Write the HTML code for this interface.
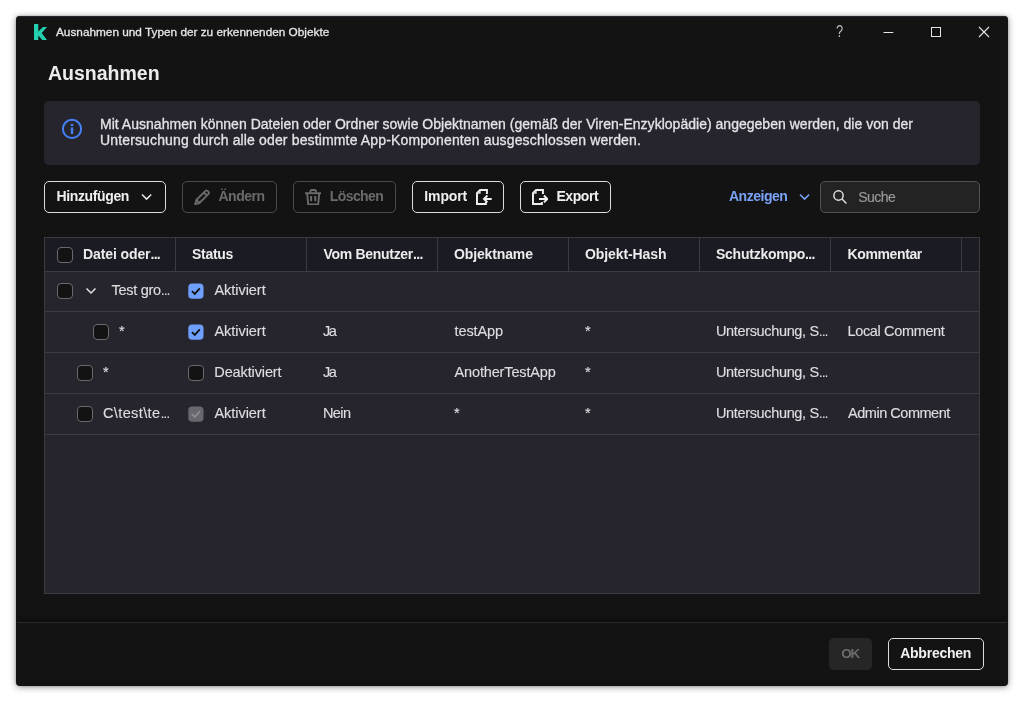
<!DOCTYPE html>
<html lang="de">
<head>
<meta charset="utf-8">
<title>Ausnahmen und Typen der zu erkennenden Objekte</title>
<style>
*{box-sizing:border-box;margin:0;padding:0}
html,body{width:1024px;height:702px;background:#fff;overflow:hidden}
body{font-family:"Liberation Sans",sans-serif;color:#e9e9e9;position:relative}
.win{will-change:transform;position:absolute;left:16px;top:16px;width:992px;height:670px;background:#131313;border-radius:4px;box-shadow:0 1px 7px rgba(0,0,0,.42),0 0 2px rgba(0,0,0,.3),inset 0 1px 0 #25252e}
.abs{position:absolute;white-space:nowrap}
.title{left:40px;top:9px;font-size:11.8px;line-height:14px;color:#e6e6e6}
.h1{left:32px;top:44px;font-size:19.5px;line-height:26px;font-weight:bold;color:#ececec}
.info{position:absolute;left:28px;top:85px;width:936px;height:64px;background:#26252e;border-radius:5px}
.info p{position:absolute;left:56px;top:15px;font-size:14px;line-height:16px;color:#e4e4e6;white-space:nowrap}
.btn{position:absolute;top:165px;height:32px;border:1px solid #dcdcdc;border-radius:5px;font-size:14px;font-weight:bold;color:#f0f0f0;line-height:30px;white-space:nowrap}
.btn.dis{border-color:#4b4b4b;color:#6b6b6b}
.btn span{position:absolute;top:-1px}
.search{position:absolute;left:804px;top:165px;width:160px;height:32px;border:1px solid #525252;border-radius:5px;background:#232323}
.search span{position:absolute;left:37.300px;top:-.5px;line-height:31px;font-size:14px;letter-spacing:-.55px;color:#9a9a9a}
.link{left:713px;top:165px;line-height:31px;font-size:14px;font-weight:bold;color:#7aa2f7;letter-spacing:-.49px}
.table{position:absolute;left:28px;top:221px;width:936px;height:357px;background:#26252e;border:1px solid #3b3b41}
.thead{position:absolute;left:0;top:0;width:934px;height:34px;background:#1b1b24;border-bottom:1px solid #3b3b41;z-index:2}
.th{position:absolute;top:0;height:33px;line-height:33px;font-size:14px;font-weight:bold;color:#ececec;white-space:nowrap}
.vs{position:absolute;top:0;width:1px;height:33px;background:#3b3b41}
.row{position:absolute;left:0;width:934px;height:41px;border-bottom:1px solid #3c3c45}
.td{position:absolute;top:-.8px;line-height:40px;font-size:14.5px;color:#dedee0;white-space:nowrap}
.title,.info p{-webkit-text-stroke:.3px}
.td,.search span{-webkit-text-stroke:.15px}
.td .e{-webkit-text-stroke:0}
.e{letter-spacing:-1.1px}
.th .e{letter-spacing:-.7px}
.cb{position:absolute;width:16px;height:16px;border:1px solid #6a6a6c;border-radius:4px;background:#131313}
.cb.on,.cb.gray{background:none;border:0}
.foot{position:absolute;left:1px;top:606px;width:990px;height:1px;background:#2b2b2b}
.foot:before{content:"";position:absolute;left:0;top:-7px;width:990px;height:7px;background:linear-gradient(rgba(0,0,0,0),rgba(0,0,0,.28))}
svg{display:block}
</style>
</head>
<body>
<div class="win">
  <!-- title bar -->
  <svg class="abs" style="left:18px;top:8px" width="13" height="16" viewBox="0 0 13 16"><path d="M0 0H4.300V7.400L9 3H13L7.700 8.900L13 16H8.300L4.300 11.400V16H0Z" fill="#23d1ae"/></svg>
  <div class="abs title">Ausnahmen und Typen der zu erkennenden Objekte</div>
  <div class="abs" style="left:820.400px;top:7.500px;font-size:16px;line-height:16px;color:#bdbdbd;transform:scaleX(.8);transform-origin:0 0">?</div>
  <svg class="abs" style="left:866px;top:10px" width="12" height="12" viewBox="0 0 12 12"><path d="M1.500 6.500h9.800" stroke="#e6e6e6" stroke-width="1" fill="none"/></svg>
  <svg class="abs" style="left:914px;top:10px" width="12" height="12" viewBox="0 0 12 12"><rect x="1.500" y="1.500" width="9" height="9" stroke="#e6e6e6" stroke-width="1" fill="none"/></svg>
  <svg class="abs" style="left:962px;top:10px" width="12" height="12" viewBox="0 0 12 12"><path d="M1 1l10 10M11 1L1 11" stroke="#e6e6e6" stroke-width="1.100" fill="none"/></svg>

  <div class="abs h1">Ausnahmen</div>

  <div class="info">
    <svg class="abs" style="left:17px;top:17px" width="22" height="22" viewBox="0 0 22 22"><circle cx="11" cy="10.900" r="9.100" fill="none" stroke="#4680f6" stroke-width="2"/><rect x="9.800" y="9.300" width="2.400" height="6.700" fill="#4680f6"/><rect x="9.800" y="5.900" width="2.400" height="2.100" fill="#4680f6"/></svg>
    <p><span style="letter-spacing:.02px">Mit Ausnahmen können Dateien oder Ordner sowie Objektnamen (gemäß der Viren-Enzyklopädie) angegeben werden, die von der</span><br><span style="letter-spacing:.143px">Untersuchung durch alle oder bestimmte App-Komponenten ausgeschlossen werden.</span></p>
  </div>

  <!-- toolbar -->
  <div class="btn" style="left:28px;width:122px"><span style="left:11.500px;letter-spacing:-.37px">Hinzufügen</span>
    <svg class="abs" style="left:95.500px;top:10.500px" width="12" height="8" viewBox="0 0 12 8"><path d="M1 1.500l4.600 4.600 4.600-4.600" stroke="#e6e6e6" stroke-width="1.500" fill="none"/></svg></div>
  <div class="btn dis" style="left:166px;width:95px">
    <svg class="abs" style="left:10.800px;top:6.800px" width="16.400" height="16.400" viewBox="0 0 16 16"><path d="M1.200 14.800L2.300 10.700L11.200 1.800a1.400 1.400 0 0 1 2 0l1 1a1.400 1.400 0 0 1 0 2L5.300 13.700ZM2.300 10.700L5.300 13.700M9.600 3.400L12.600 6.400" stroke="#6b6b6b" stroke-width="1.850" fill="none" stroke-linejoin="round"/></svg>
    <span style="left:35.400px;letter-spacing:-.46px">Ändern</span></div>
  <div class="btn dis" style="left:277px;width:103px">
    <svg class="abs" style="left:10.800px;top:6.800px" width="16.400" height="16.400" viewBox="0 0 16.400 16.400"><path d="M5.400 3.400V2.500a1.500 1.500 0 0 1 1.500-1.500h2.600a1.500 1.500 0 0 1 1.500 1.500V3.400" stroke="#6b6b6b" stroke-width="1.900" fill="none"/><path d="M0 4.200h16.400" stroke="#6b6b6b" stroke-width="1.900"/><path d="M2.200 5L3.200 15.400H13.200L14.200 5" stroke="#6b6b6b" stroke-width="1.900" fill="none"/><path d="M6.100 7.100v5.100M10.300 7.100v5.100" stroke="#6b6b6b" stroke-width="2"/></svg>
    <span style="left:35.800px;letter-spacing:-.6px">Löschen</span></div>
  <div class="btn" style="left:396px;width:92px"><span style="left:11.300px;letter-spacing:-.12px">Import</span>
    <svg class="abs" style="left:62.900px;top:6.700px" width="16.600" height="16.600" viewBox="0 0 17 17"><path d="M11.200 5V1H4.200L1 4.200V15.300H10.100V13.400" stroke="#f0f0f0" stroke-width="2" fill="none"/><path d="M1 4.800L4.800 1V4.800Z" fill="#d8d8d8"/><path d="M16.100 10.200H8.800M11.700 6.700L8.200 10.200L11.700 13.700" stroke="#f0f0f0" stroke-width="2" fill="none"/></svg></div>
  <div class="btn" style="left:504px;width:91px">
    <svg class="abs" style="left:10.900px;top:6.700px" width="16.600" height="16.600" viewBox="0 0 17 17"><path d="M11.200 5V1H4.200L1 4.200V15.300H10.100V13.400" stroke="#f0f0f0" stroke-width="2" fill="none"/><path d="M1 4.800L4.800 1V4.800Z" fill="#d8d8d8"/><path d="M7.100 10.200H15.200M12.200 6.700L15.700 10.200L12.200 13.700" stroke="#f0f0f0" stroke-width="2" fill="none"/></svg>
    <span style="left:35.400px;letter-spacing:-.42px">Export</span></div>
  <div class="abs link">Anzeigen</div>
  <svg class="abs" style="left:782.500px;top:177px" width="12" height="8" viewBox="0 0 12 8"><path d="M1 1.500l4.600 4.600 4.600-4.600" stroke="#7aa2f7" stroke-width="1.500" fill="none"/></svg>
  <div class="search">
    <svg class="abs" style="left:11px;top:6.800px" width="15.800" height="15.800" viewBox="0 0 17 17"><circle cx="7" cy="7" r="5" stroke="#e0e0e0" stroke-width="1.600" fill="none"/><path d="M10.800 10.800l4.700 4.700" stroke="#e0e0e0" stroke-width="1.600"/></svg>
    <span>Suche</span></div>

  <!-- table -->
  <div class="table">
    <div class="thead">
      <div class="cb" style="left:12px;top:9px"></div>
      <div class="th" style="left:38px;letter-spacing:-.1px">Datei oder<span class="e">...</span></div>
      <div class="th" style="left:147px;letter-spacing:-.28px">Status</div>
      <div class="th" style="left:278.500px;letter-spacing:-.3px">Vom Benutzer<span class="e">...</span></div>
      <div class="th" style="left:409px;letter-spacing:-.13px">Objektname</div>
      <div class="th" style="left:540px;letter-spacing:-.1px">Objekt-Hash</div>
      <div class="th" style="left:671px;letter-spacing:-.25px">Schutzkompo<span class="e">...</span></div>
      <div class="th" style="left:802.500px;letter-spacing:-.375px">Kommentar</div>
      <div class="vs" style="left:130px"></div><div class="vs" style="left:261px"></div><div class="vs" style="left:392px"></div><div class="vs" style="left:523px"></div><div class="vs" style="left:654px"></div><div class="vs" style="left:785px"></div><div class="vs" style="left:916px"></div>
    </div>
    <div class="row" style="top:33px">
      <div class="cb" style="left:12px;top:12px"></div>
      <svg class="abs" style="left:40px;top:15.500px" width="12" height="8" viewBox="0 0 12 8"><path d="M1.500 1.500l4.500 4.500 4.500-4.500" stroke="#e0e0e0" stroke-width="1.500" fill="none"/></svg>
      <div class="td" style="left:66.500px;letter-spacing:-.29px">Test gro<span class="e">...</span></div>
      <div class="cb on" style="left:143px;top:12px"><svg width="16" height="16" viewBox="0 0 16 16"><rect x=".3" y=".5" width="15.200" height="15.200" rx="3.800" fill="#6f9ffc"/><path d="M3.900 8.200l2.900 2.700 5-5.600" stroke="#101010" stroke-width="1.750" fill="none"/></svg></div>
      <div class="td" style="left:169.500px;letter-spacing:-.05px">Aktiviert</div>
    </div>
    <div class="row" style="top:74px">
      <div class="cb" style="left:48px;top:12px"></div>
      <div class="td" style="left:74px">*</div>
      <div class="cb on" style="left:143px;top:12px"><svg width="16" height="16" viewBox="0 0 16 16"><rect x=".3" y=".5" width="15.200" height="15.200" rx="3.800" fill="#6f9ffc"/><path d="M3.900 8.200l2.900 2.700 5-5.600" stroke="#101010" stroke-width="1.750" fill="none"/></svg></div>
      <div class="td" style="left:169.500px;letter-spacing:-.05px">Aktiviert</div>
      <div class="td" style="left:278px;letter-spacing:-1.5px">Ja</div>
      <div class="td" style="left:409.500px;letter-spacing:-.1px">testApp</div>
      <div class="td" style="left:540px">*</div>
      <div class="td" style="left:671px;letter-spacing:-.35px">Untersuchung, S<span class="e">...</span></div>
      <div class="td" style="left:802.500px;letter-spacing:-.35px">Local Comment</div>
    </div>
    <div class="row" style="top:115px">
      <div class="cb" style="left:32px;top:12px"></div>
      <div class="td" style="left:58px">*</div>
      <div class="cb" style="left:143px;top:12px"></div>
      <div class="td" style="left:169.300px;letter-spacing:-.12px">Deaktiviert</div>
      <div class="td" style="left:278px;letter-spacing:-1.5px">Ja</div>
      <div class="td" style="left:409.500px;letter-spacing:-.14px">AnotherTestApp</div>
      <div class="td" style="left:540px">*</div>
      <div class="td" style="left:671px;letter-spacing:-.35px">Untersuchung, S<span class="e">...</span></div>
    </div>
    <div class="row" style="top:156px">
      <div class="cb" style="left:32px;top:12px"></div>
      <div class="td" style="left:58px;letter-spacing:.38px">C\test\te<span class="e">...</span></div>
      <div class="cb gray" style="left:143px;top:12px"><svg width="16" height="16" viewBox="0 0 16 16"><rect x=".3" y=".5" width="15.200" height="15.200" rx="3.800" fill="#68686e"/><path d="M3.900 8.200l2.900 2.700 5-5.600" stroke="#909096" stroke-width="1.600" fill="none"/></svg></div>
      <div class="td" style="left:169.500px;letter-spacing:-.05px">Aktiviert</div>
      <div class="td" style="left:278px;letter-spacing:-.6px">Nein</div>
      <div class="td" style="left:409px">*</div>
      <div class="td" style="left:540px">*</div>
      <div class="td" style="left:671px;letter-spacing:-.35px">Untersuchung, S<span class="e">...</span></div>
      <div class="td" style="left:803px;letter-spacing:-.47px">Admin Comment</div>
    </div>
  </div>

  <!-- footer -->
  <div class="foot"></div>
  <div class="abs" style="left:813px;top:622px;width:43px;height:32px;border-radius:5px;background:#262626;color:#6b6b6b;font-size:13.5px;letter-spacing:-1.3px;font-weight:bold;line-height:31px;text-align:center;text-indent:-.8px">OK</div>
  <div class="btn" style="left:872px;top:622px;width:96px"><span style="left:11.200px;letter-spacing:-.24px">Abbrechen</span></div>
</div>
</body>
</html>
